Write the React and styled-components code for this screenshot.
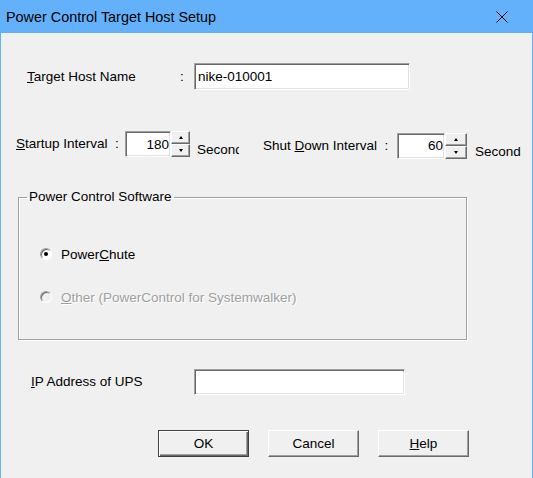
import React from 'react';
import styled, { createGlobalStyle } from 'styled-components';

const GlobalStyle = createGlobalStyle`
  html, body {
    margin: 0;
    padding: 0;
    background: #f0f0f0;
  }
  body {
    font-family: "Liberation Sans", Arial, sans-serif;
    color: #000;
  }
`;

const Window = styled.div`
  width: 533px;
  height: 478px;
  box-sizing: border-box;
  border-left: 1px solid #63b1fb;
  border-right: 1px solid #63b1fb;
  display: flex;
  flex-direction: column;
  overflow: hidden;
  background: #f0f0f0;
`;

const TitleBar = styled.div`
  height: 33px;
  flex: 0 0 33px;
  background: #63b1fb;
  display: flex;
  align-items: center;
  justify-content: space-between;
  padding-left: 5px;
  font-size: 14.4px;
  color: #000;
`;

const CloseButton = styled.div`
  width: 46px;
  height: 33px;
  display: flex;
  align-items: center;
  justify-content: center;
  margin-right: 7px;
`;

const Body = styled.div`
  flex: 1;
  display: flex;
  flex-direction: column;
  font-size: 13.5px;
`;

const HostRow = styled.div`
  display: flex;
  align-items: center;
  margin-top: 30px;
  padding-left: 26px;
`;

const Label = styled.span`
  width: ${(p) => p.$width}px;
  flex: 0 0 ${(p) => p.$width}px;
  white-space: nowrap;
  line-height: 16px;
`;

const Colon = styled.span`
  width: 14px;
  flex: 0 0 14px;
`;

const TextBox = styled.div`
  width: ${(p) => p.$width}px;
  height: ${(p) => p.$height}px;
  box-sizing: border-box;
  background: #fff;
  border: 1px solid;
  border-color: #a0a0a0 #fff #fff #a0a0a0;
  box-shadow: inset 1px 1px 0 #696969, inset -1px -1px 0 #e3e3e3;
  display: flex;
  align-items: center;
  justify-content: ${(p) => (p.$right ? 'flex-end' : 'flex-start')};
  padding: 0 ${(p) => (p.$right ? 1 : 3)}px;
  white-space: nowrap;
`;

const IntervalRow = styled.div`
  display: flex;
  align-items: flex-start;
  height: 27px;
  margin-top: 40px;
  padding-left: 15px;
`;

const IntervalGroup = styled.div`
  display: flex;
  align-items: center;
  margin-top: ${(p) => p.$top || 0}px;
  margin-left: ${(p) => p.$left || 0}px;
`;

const Spinner = styled.div`
  display: flex;
  flex-direction: column;
  width: ${(p) => p.$width}px;
  height: ${(p) => p.$height}px;
`;

const SpinButton = styled.div`
  flex: 1;
  box-sizing: border-box;
  background: #f0f0f0;
  border: 1px solid;
  border-color: #fff #696969 #696969 #fff;
  box-shadow: inset -1px -1px 0 #a0a0a0;
  display: flex;
  align-items: center;
  justify-content: center;
`;

const Arrow = styled.span`
  width: 0;
  height: 0;
  border-left: 2.5px solid transparent;
  border-right: 2.5px solid transparent;
  ${(p) => (p.$down ? 'border-top: 3px solid #000;' : 'border-bottom: 3px solid #000;')}
`;

const Unit = styled.span`
  width: ${(p) => p.$width}px;
  overflow: hidden;
  white-space: nowrap;
  margin-left: ${(p) => p.$gap}px;
  align-self: flex-start;
  margin-top: ${(p) => p.$drop}px;
  line-height: 16px;
`;

const GroupBox = styled.fieldset`
  margin: 32px 0 0 17px;
  padding: 0;
  width: 449px;
  height: 151px;
  box-sizing: border-box;
  border: 1px solid #a0a0a0;
  box-shadow: 1px 1px 0 #fff, inset 1px 1px 0 #fff;
`;

const GroupTitle = styled.legend`
  padding: 0 2px;
  margin-left: 8px;
  line-height: 16px;
`;

const RadioList = styled.div`
  display: flex;
  flex-direction: column;
  gap: 27px;
  padding: 41px 0 0 21px;
`;

const RadioRow = styled.div`
  display: flex;
  align-items: center;
  height: 16px;
  color: ${(p) => (p.$disabled ? '#a0a0a0' : '#000')};
  text-shadow: ${(p) => (p.$disabled ? '1px 1px 0 #fff' : 'none')};
`;

const RadioCircle = styled.span`
  width: 12px;
  height: 12px;
  box-sizing: border-box;
  border-radius: 50%;
  border: 1px solid;
  border-color: #a0a0a0 #fff #fff #a0a0a0;
  background: ${(p) => (p.$disabled ? '#f0f0f0' : '#fff')};
  box-shadow: inset 1px 1px 0 #696969;
  display: flex;
  align-items: center;
  justify-content: center;
  margin-right: 9px;
  &::after {
    content: '';
    width: 4px;
    height: 4px;
    border-radius: 50%;
    background: ${(p) => (p.$checked ? '#000' : 'transparent')};
  }
`;

const IpRow = styled.div`
  display: flex;
  align-items: center;
  margin-top: 29px;
  padding-left: 30px;
`;

const ButtonRow = styled.div`
  display: flex;
  gap: 19px;
  margin-top: 35px;
  padding-left: 157px;
`;

const Button = styled.div`
  width: 91px;
  height: 27px;
  box-sizing: border-box;
  background: #f0f0f0;
  border: 1px solid;
  border-color: ${(p) => (p.$default ? '#404040' : '#fff #696969 #696969 #fff')};
  box-shadow: ${(p) =>
    p.$default
      ? 'inset 1px 1px 0 #fff, inset -1px -1px 0 #696969, inset -2px -2px 0 #a0a0a0'
      : 'inset -1px -1px 0 #a0a0a0'};
  display: flex;
  align-items: center;
  justify-content: center;
`;

function SpinBox({ value, width, height, spinWidth }) {
  return (
    <>
      <TextBox $width={width} $height={height} $right>
        {value}
      </TextBox>
      <Spinner $width={spinWidth} $height={height}>
        <SpinButton>
          <Arrow />
        </SpinButton>
        <SpinButton>
          <Arrow $down />
        </SpinButton>
      </Spinner>
    </>
  );
}

export default function App() {
  return (
    <>
      <GlobalStyle />
      <Window>
        <TitleBar>
          <span>Power Control Target Host Setup</span>
          <CloseButton>
            <svg width="12" height="12" viewBox="0 0 12 12">
              <path d="M0.5 0.5 L11.5 11.5 M11.5 0.5 L0.5 11.5" stroke="#000" strokeWidth="1" />
            </svg>
          </CloseButton>
        </TitleBar>
        <Body>
          <HostRow>
            <Label $width={153}>
              <u>T</u>arget Host Name
            </Label>
            <Colon>:</Colon>
            <TextBox $width={216} $height={27}>nike-010001</TextBox>
          </HostRow>

          <IntervalRow>
            <IntervalGroup>
              <Label $width={109}>
                <u>S</u>tartup Interval&nbsp; :
              </Label>
              <SpinBox value="180" width={46} height={26} spinWidth={19} />
              <Unit $width={42} $gap={7} $drop={12}>Second</Unit>
            </IntervalGroup>
            <IntervalGroup $top={1} $left={24}>
              <Label $width={134}>
                Shut <u>D</u>own Interval&nbsp; :
              </Label>
              <SpinBox value="60" width={48} height={26} spinWidth={22} />
              <Unit $width={50} $gap={8} $drop={13}>Second</Unit>
            </IntervalGroup>
          </IntervalRow>

          <GroupBox>
            <GroupTitle>Power Control Software</GroupTitle>
            <RadioList>
              <RadioRow>
                <RadioCircle $checked />
                <span>
                  Power<u>C</u>hute
                </span>
              </RadioRow>
              <RadioRow $disabled>
                <RadioCircle $disabled />
                <span>
                  <u>O</u>ther (PowerControl for Systemwalker)
                </span>
              </RadioRow>
            </RadioList>
          </GroupBox>

          <IpRow>
            <Label $width={163}>
              <u>I</u>P Address of UPS
            </Label>
            <TextBox $width={211} $height={26} />
          </IpRow>

          <ButtonRow>
            <Button $default>OK</Button>
            <Button>Cancel</Button>
            <Button>
              <span>
                <u>H</u>elp
              </span>
            </Button>
          </ButtonRow>
        </Body>
      </Window>
    </>
  );
}
